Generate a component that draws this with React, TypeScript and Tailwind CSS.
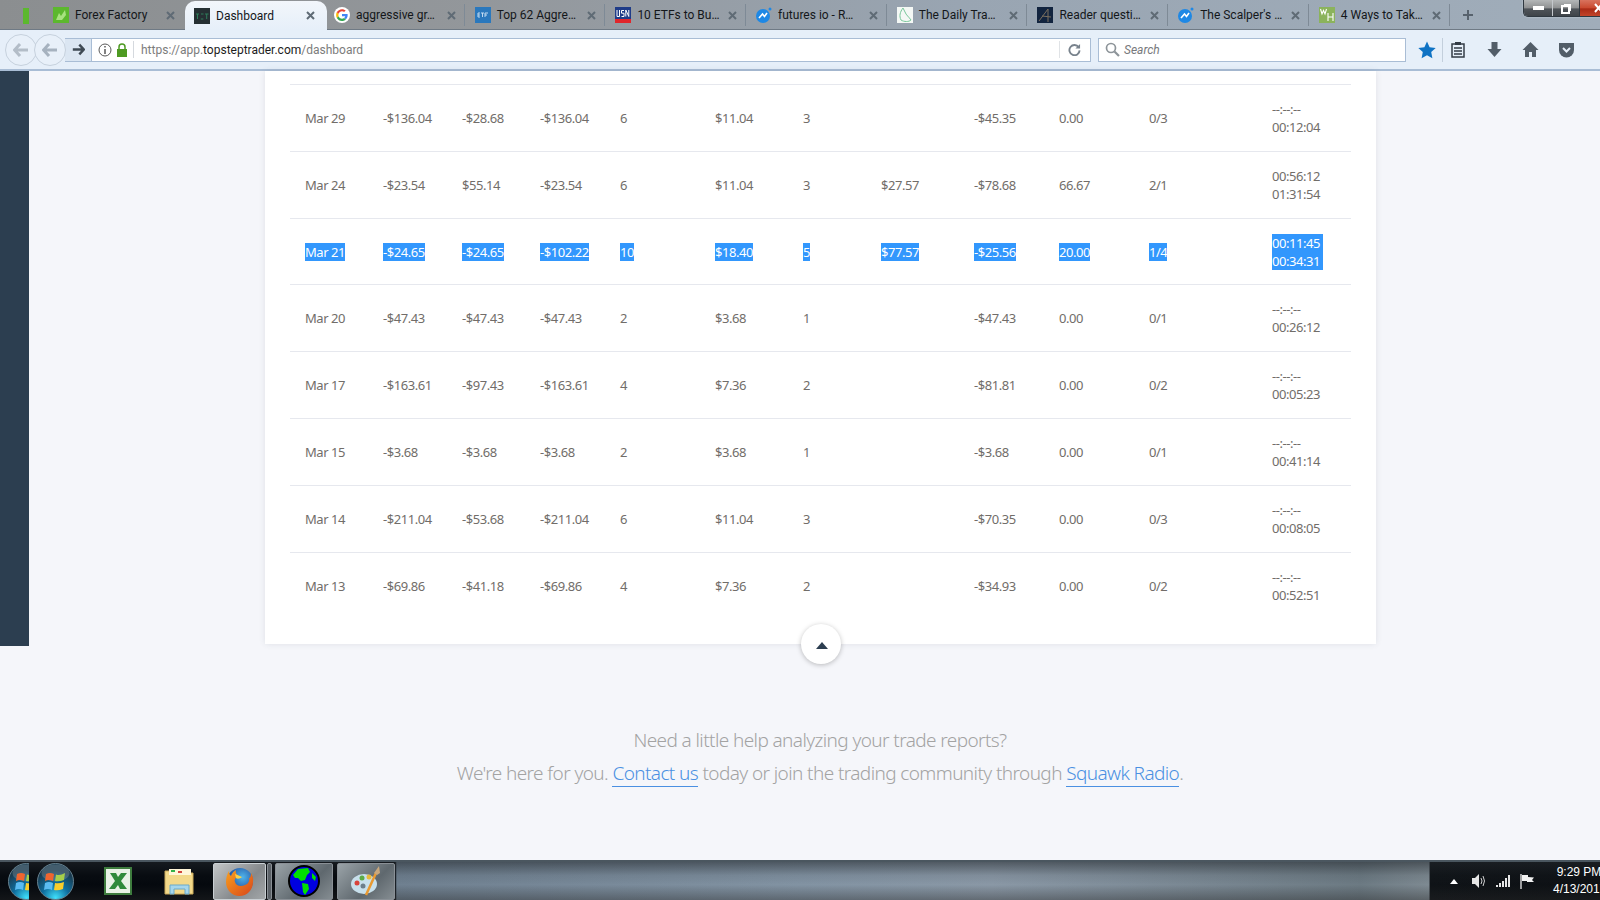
import React from "react";

const rows: { d: string[]; t: [string, string]; sel?: boolean; h: string }[] = [
  { d: ["Mar 29", "-$136.04", "-$28.68", "-$136.04", "6", "$11.04", "3", "", "-$45.35", "0.00", "0/3"], t: ["--:--:--", "00:12:04"], h: "h-[67px]" },
  { d: ["Mar 24", "-$23.54", "$55.14", "-$23.54", "6", "$11.04", "3", "$27.57", "-$78.68", "66.67", "2/1"], t: ["00:56:12", "01:31:54"], h: "h-[67px]" },
  { d: ["Mar 21", "-$24.65", "-$24.65", "-$102.22", "10", "$18.40", "5", "$77.57", "-$25.56", "20.00", "1/4"], t: ["00:11:45", "00:34:31"], sel: true, h: "h-[66px] pt-[1px]" },
  { d: ["Mar 20", "-$47.43", "-$47.43", "-$47.43", "2", "$3.68", "1", "", "-$47.43", "0.00", "0/1"], t: ["--:--:--", "00:26:12"], h: "h-[67px]" },
  { d: ["Mar 17", "-$163.61", "-$97.43", "-$163.61", "4", "$7.36", "2", "", "-$81.81", "0.00", "0/2"], t: ["--:--:--", "00:05:23"], h: "h-[67px]" },
  { d: ["Mar 15", "-$3.68", "-$3.68", "-$3.68", "2", "$3.68", "1", "", "-$3.68", "0.00", "0/1"], t: ["--:--:--", "00:41:14"], h: "h-[67px]" },
  { d: ["Mar 14", "-$211.04", "-$53.68", "-$211.04", "6", "$11.04", "3", "", "-$70.35", "0.00", "0/3"], t: ["--:--:--", "00:08:05"], h: "h-[67px]" },
  { d: ["Mar 13", "-$69.86", "-$41.18", "-$69.86", "4", "$7.36", "2", "", "-$34.93", "0.00", "0/2"], t: ["--:--:--", "00:52:51"], h: "h-[67px]" },
];

const Box = ({ c, children }: { c: string; children?: React.ReactNode }) => (
  <svg width="16" height="16" viewBox="0 0 16 16" className="shrink-0">
    <rect width="16" height="16" fill={c} />
    {children}
  </svg>
);

const Orbit = () => (
  <svg width="16" height="16" viewBox="0 0 16 16" className="shrink-0">
    <circle cx="7" cy="9" r="7" fill="#1e88e5" />
    <path d="M3 11 L6.500 7 L8.500 9.500 L11 6" stroke="#fff" strokeWidth="1.600" fill="none" />
    <circle cx="14" cy="2" r="1.500" fill="#1e88e5" />
  </svg>
);

const icons: Record<string, React.ReactNode> = {
  ff: (
    <Box c="#5cb82e">
      <path d="M3 13 L6 6 L8 9 L12 3 L13 8 L9 13 Z" fill="#a7e27f" />
    </Box>
  ),
  tst: (
    <svg width="16" height="16" viewBox="0 0 16 16" className="shrink-0">
      <rect width="16" height="16" fill="#252f33" />
      <path d="M2 6h3M3.500 6v5M7 6h2.500M6.800 11h2.500M11 6h3.500M12.700 6v5" stroke="#2e7d5b" strokeWidth="1" fill="none" />
    </svg>
  ),
  g: (
    <svg width="16" height="16" viewBox="0 0 48 48" className="shrink-0">
      <circle cx="24" cy="24" r="24" fill="#fff" />
      <path fill="#4285F4" d="M41 24.500c0-1.300-.1-2.200-.4-3.500H24v6.600h9.700c-.4 2.200-1.700 4-3.600 5.200l5.500 4.300c3.300-3 5.400-7.500 5.400-12.600z" />
      <path fill="#34A853" d="M24 42c4.700 0 8.600-1.500 11.600-4.400l-5.500-4.300c-1.500 1.100-3.600 1.800-6.100 1.800-4.700 0-8.700-3.100-10.100-7.400l-5.700 4.400C11.100 38.100 17.100 42 24 42z" />
      <path fill="#FBBC05" d="M13.900 27.700c-.4-1.100-.6-2.400-.6-3.700s.2-2.600.6-3.700l-5.700-4.400C7 18.100 6.400 21 6.400 24s.6 5.900 1.800 8.100z" />
      <path fill="#EA4335" d="M24 12.900c3 0 5 1.300 6.200 2.400l4.800-4.700C32.500 8.300 28.700 6.400 24 6.400c-6.900 0-12.900 3.900-15.800 9.500l5.700 4.400c1.400-4.300 5.400-7.400 10.100-7.400z" />
    </svg>
  ),
  etf: (
    <svg width="16" height="16" viewBox="0 0 16 16" className="shrink-0">
      <rect width="16" height="16" fill="#2a78bd" />
      <path d="M3 6h2M3 8h2M3 10h2M3 6v4M6 6h3M7.500 6v4M10 6h3M10 6v4M10 8h2" stroke="#cfe3f5" strokeWidth="0.900" fill="none" />
    </svg>
  ),
  usn: (
    <svg width="16" height="16" viewBox="0 0 16 16" className="shrink-0">
      <rect width="16" height="16" fill="#1f3c88" />
      <rect y="12" width="16" height="4" fill="#e0262b" />
      <path d="M2 3v6.500h2.500V3M9 3.500H6.500V6.200H9V9.500H6.500M10.800 9.500V3L13.800 9.500V3" stroke="#fff" strokeWidth="1" fill="none" />
    </svg>
  ),
  orbit: <Orbit />,
  daily: (
    <svg width="16" height="16" viewBox="0 0 16 16" className="shrink-0">
      <rect width="16" height="16" fill="#f4f8f5" />
      <path d="M6 1 C3 5 2 9 4 13 C7 15 12 15 14 13 C12 10 9 8 8 5 Z" stroke="#79c79b" strokeWidth="1" fill="none" />
    </svg>
  ),
  reader: (
    <svg width="16" height="16" viewBox="0 0 16 16" className="shrink-0">
      <rect width="16" height="16" fill="#12243f" />
      <path d="M2 14 L11 2 L11 15 M5 9 L14 10" stroke="#7a6e5e" strokeWidth="1" fill="none" />
    </svg>
  ),
  wh: (
    <svg width="16" height="16" viewBox="0 0 16 16" className="shrink-0">
      <rect width="16" height="16" fill="#8bb35c" />
      <path d="M1.500 2L3 7 4.500 3.500 6 7 7.500 2M9 6v8M14 6v8M9 10h5" stroke="#fff" strokeWidth="1.100" fill="none" />
    </svg>
  ),
};

const tabs = [
  { i: "g", t: "aggressive gr…" },
  { i: "etf", t: "Top 62 Aggre…" },
  { i: "usn", t: "10 ETFs to Bu…" },
  { i: "orbit", t: "futures io - R…" },
  { i: "daily", t: "The Daily Tra…" },
  { i: "reader", t: "Reader questi…" },
  { i: "orbit", t: "The Scalper's …" },
  { i: "wh", t: "4 Ways to Tak…" },
];

const X = () => (
  <svg width="9" height="9" viewBox="0 0 9 9" className="shrink-0">
    <path d="M1 1 L8 8 M8 1 L1 8" stroke="#5f6b75" strokeWidth="2" />
  </svg>
);

function Tab({ i, t, w = "w-[140.7px] border-r border-[#7e8a96] pr-[8px]" }: { i: string; t: string; w?: string }) {
  return (
    <div className={`flex h-[22px] shrink-0 items-center pl-[10px] pt-[1px] ${w}`}>
      {icons[i]}
      <span className="ml-[6px] flex-1 whitespace-nowrap text-[12px] text-[#14171a]">{t}</span>
      <X />
    </div>
  );
}

function NavCircle({ className, tone }: { className: string; tone: string }) {
  return (
    <div className={`flex h-[32px] w-[32px] shrink-0 items-center justify-center rounded-full border border-[#c6d1dd] bg-[#e8f0f9] ${className}`}>
      <svg width="16" height="14" viewBox="0 0 16 14">
        <path d="M7 1 L1.500 7 L7 13 M2 7 H15" stroke={tone} strokeWidth="3" fill="none" />
      </svg>
    </div>
  );
}

function Row({ r }: { r: (typeof rows)[number] }) {
  const s = r.sel ? "bg-[#3297fd] text-white" : "";
  return (
    <div className={`grid ${r.h} grid-cols-[78px_79px_78px_80px_95px_88px_78px_93px_85px_90px_123px_1fr] items-center border-t border-[#e6e8ee] pl-[15px]`}>
      {r.d.map((v, k) => (
        <div key={k} className="leading-[18px]">
          {v && <span className={`inline-block ${s}`}>{v}</span>}
        </div>
      ))}
      <div className="leading-[18px]">
        <div className={`w-[51px] ${s}`}>
          <div>{r.t[0]}</div>
          <div>{r.t[1]}</div>
        </div>
      </div>
    </div>
  );
}

function Orb() {
  return (
    <svg width="37" height="37" viewBox="0 0 37 37">
      <defs>
        <radialGradient id="orbg" cx="50%" cy="95%" r="75%">
          <stop offset="0%" stopColor="#3fe0fb" />
          <stop offset="50%" stopColor="#0f6e9e" />
          <stop offset="100%" stopColor="#1a3a4e" />
        </radialGradient>
      </defs>
      <circle cx="18.500" cy="18.500" r="18" fill="url(#orbg)" stroke="#66808e" />
      <ellipse cx="18.500" cy="10" rx="14" ry="8.500" fill="#ffffff" opacity="0.18" />
      <path d="M9 11 Q13 9 17 11 L16 18 Q12 16 8 18 Z" fill="#f0652f" />
      <path d="M19 11.500 Q23 13 28 10 L27 17 Q22 19 18 18 Z" fill="#a6cf4a" />
      <path d="M8 20 Q12 18 16 20 L15 27 Q11 25 7 27 Z" fill="#5bbcf2" />
      <path d="M18 20 Q22 21 27 19 L26 26 Q21 28 17 27 Z" fill="#fbcd2a" />
    </svg>
  );
}

export default function App() {
  return (
    <div className="flex h-[900px] w-[1600px] flex-col overflow-hidden bg-[#f5f6fa] font-['Roboto',sans-serif]">
      {/* tab strip */}
      <div className="relative flex h-[30px] shrink-0 items-center border-b border-[#6f7a85] bg-[linear-gradient(90deg,#8b8e90_0%,#93979b_30%,#99a5b2_60%,#a0adba_100%)] pl-[43px]">
        <div className="absolute left-[23px] top-[8px] h-[16px] w-[6px] bg-[#5cb82e]" />
        <Tab i="ff" t="Forex Factory" w="w-[143px] pr-[11px]" />
        <div className="-mb-[1px] -ml-[1px] -mr-[3px] flex h-[29px] w-[142px] shrink-0 items-center self-end rounded-t-[10px] bg-[linear-gradient(180deg,#f2f6fb,#e6eff9)] pl-[9px] pr-[12px]">
          {icons.tst}
          <span className="ml-[6px] flex-1 whitespace-nowrap text-[12px] text-[#14171a]">Dashboard</span>
          <X />
        </div>
        {tabs.map((t, k) => (
          <Tab key={k} i={t.i} t={t.t} />
        ))}
        <div className="ml-[12px] flex h-[29px] items-center">
          <svg width="12" height="12" viewBox="0 0 12 12">
            <path d="M6 1 V11 M1 6 H11" stroke="#57626d" strokeWidth="2" />
          </svg>
        </div>
        {/* window buttons */}
        <div className="absolute right-0 top-0 flex h-[17px] w-[77px] overflow-hidden rounded-bl-[5px] border border-t-0 border-r-0 border-[#2f3840] shadow-[0_0_2px_rgba(255,255,255,0.5)]">
          <div className="flex w-[28px] items-center justify-center bg-[linear-gradient(180deg,#b4b7b8_0%,#8e9091_50%,#4f5459_55%,#3f4449_100%)]">
            <div className="h-[4px] w-[11px] bg-white" />
          </div>
          <div className="relative flex w-[27px] items-center justify-center border-l border-[#c4c8cc] bg-[linear-gradient(180deg,#b4b7b8_0%,#8e9091_50%,#4f5459_55%,#3f4449_100%)]">
            <div className="h-[9px] w-[9px] -translate-x-[1px] translate-y-[1px] border-2 border-white shadow-[2px_-2px_0_-1px_#ffffff]" />
          </div>
          <div className="flex flex-1 items-center justify-end overflow-hidden border-l border-[#2f3840] bg-[linear-gradient(180deg,#d8735e_0%,#c9492f_50%,#a92a15_55%,#c2452a_100%)]">
            <svg width="6" height="10" viewBox="0 0 6 10">
              <path d="M1 1 L8 9 M8 1 L1 9" stroke="#fff" strokeWidth="2" />
            </svg>
          </div>
        </div>
      </div>

      {/* navigation */}
      <div className="flex h-[41px] shrink-0 items-center border-b-2 border-[#a9bdd5] bg-[#e6eff9] pl-[5px] pr-[8px]">
        <NavCircle className="" tone="#b3bdc8" />
        <NavCircle className="relative z-10 -ml-[3px]" tone="#a6b2bf" />
        <div className="-ml-[1px] flex h-[24px] w-[26px] shrink-0 items-center justify-center border-y border-[#a9bdd5] bg-[#dbe6f2]">
          <svg width="13" height="13" viewBox="0 0 16 14">
            <path d="M9 1 L14.500 7 L9 13 M14 7 H1" stroke="#3f4a54" strokeWidth="3" fill="none" />
          </svg>
        </div>
        <div className="flex h-[24px] w-[1000px] shrink-0 items-center border border-[#a9bdd5] bg-white pl-[6px] pr-[7px] text-[12px]">
          <svg width="14" height="14" viewBox="0 0 14 14" className="shrink-0">
            <circle cx="7" cy="7" r="6" stroke="#5a5a5a" strokeWidth="1" fill="none" />
            <path d="M7 6 V11 M7 3 V4.500" stroke="#5a5a5a" strokeWidth="1.500" />
          </svg>
          <svg width="12" height="14" viewBox="0 0 12 14" className="ml-[4px] shrink-0">
            <path d="M3 6 V4 a3 3 0 0 1 6 0 V6" stroke="#4e9a22" strokeWidth="1.500" fill="none" />
            <rect x="1" y="6" width="10" height="8" fill="#4e9a22" />
          </svg>
          <div className="ml-[5px] mr-[7px] h-[17px] w-px bg-[#d5d9de]" />
          <span className="flex-1 whitespace-nowrap text-[#7c7c7c]">
            https://app.<span className="text-[#1c1c1c]">topsteptrader.com</span>/dashboard
          </span>
          <div className="mr-[8px] h-[17px] w-px bg-[#e0e3e6]" />
          <svg width="13" height="13" viewBox="0 0 14 14" className="mr-[2px] shrink-0">
            <path d="M11.500 4.500 A5.500 5.500 0 1 0 12.500 8" stroke="#78828c" strokeWidth="2" fill="none" />
            <path d="M13 1 V6 H8 Z" fill="#78828c" />
          </svg>
        </div>
        <div className="ml-[7px] flex h-[24px] w-[308px] shrink-0 items-center border border-[#a9bdd5] bg-white pl-[6px]">
          <svg width="15" height="15" viewBox="0 0 15 15" className="shrink-0">
            <circle cx="6" cy="6" r="4.500" stroke="#8d9499" strokeWidth="1.700" fill="none" />
            <path d="M9.500 9.500 L14 14" stroke="#8d9499" strokeWidth="2.200" />
          </svg>
          <span className="ml-[4px] text-[12px] italic text-[#77797c]">Search</span>
        </div>
        <div className="ml-[12px] flex items-center">
          <svg width="18" height="18" viewBox="0 0 18 18" className="shrink-0">
            <path d="M9 0.500 L11.600 6.200 L17.700 6.900 L13.200 11.100 L14.400 17.300 L9 14.200 L3.600 17.300 L4.800 11.100 L0.300 6.900 L6.400 6.200 Z" fill="#0f73c4" />
          </svg>
          <div className="ml-[6px] h-[24px] w-px bg-[#c3cfdc]" />
          <svg width="14" height="17" viewBox="0 0 14 17" className="ml-[8px] shrink-0">
            <rect x="1" y="3" width="12" height="13" stroke="#333c45" strokeWidth="1.500" fill="#e6eff9" />
            <rect x="4" y="1" width="6" height="3" fill="#333c45" />
            <path d="M3 7 H11 M3 10 H11 M3 13 H11" stroke="#333c45" strokeWidth="1.300" />
          </svg>
          <svg width="15" height="17" viewBox="0 0 15 17" className="ml-[22px] shrink-0">
            <path d="M4.500 1 H10.500 V8 H14.500 L7.500 16 L0.500 8 H4.500 Z" fill="#525d68" />
          </svg>
          <svg width="17" height="17" viewBox="0 0 17 17" className="ml-[20px] shrink-0">
            <path d="M8.500 1 L16.500 9 H14 V16 H10 V11 H7 V16 H3 V9 H0.500 Z" fill="#525d68" />
          </svg>
          <svg width="17" height="16" viewBox="0 0 17 16" className="ml-[19px] shrink-0">
            <path d="M1 1 H16 V8 A7.500 7.500 0 0 1 1 8 Z" fill="#525d68" />
            <path d="M5 6 L8.500 9.500 L12 6" stroke="#e6eff9" strokeWidth="2" fill="none" />
          </svg>
        </div>
      </div>

      {/* page */}
      <div className="relative flex-1 text-[#a8a8a8]">
        <div className="flex items-start">
          <div className="h-[575px] w-[29px] shrink-0 bg-[#2c3e50]" />
          <div className="relative ml-[236px] h-[573px] w-[1111px] bg-white px-[25px] pt-[13px] text-[13px] text-[#716d69] shadow-[0_0_6px_rgba(60,70,90,0.12)] font-['Noto_Sans',sans-serif] tracking-[-0.45px]">
            {rows.map((r) => (
              <Row key={r.d[0]} r={r} />
            ))}
            <div className="absolute bottom-[-20px] left-[536px] flex h-[40px] w-[40px] items-center justify-center rounded-full bg-white shadow-[0_1px_5px_rgba(0,0,0,0.25)]">
              <svg width="12" height="7" viewBox="0 0 12 7" className="ml-[2px] mt-[3px]">
                <path d="M6 0 L12 7 H0 Z" fill="#2c3e50" />
              </svg>
            </div>
          </div>
        </div>
        <div className="mt-[78px] flex flex-col items-center pl-[40px] font-['Noto_Sans',sans-serif] text-[19px] font-light leading-[33px] tracking-[-0.6px] text-[#a3a3a3]">
          <p>Need a little help analyzing your trade reports?</p>
          <p>
            We're here for you. <span className="border-b border-[#4a90e2] text-[#4a90e2]">Contact us</span> today or join the trading community through{" "}
            <span className="border-b border-[#4a90e2] text-[#4a90e2]">Squawk Radio</span>.
          </p>
        </div>
      </div>

      {/* taskbar */}
      <div className="flex h-[40px] shrink-0 items-center overflow-hidden border-t-2 border-[#4a565f] bg-[linear-gradient(180deg,rgba(35,40,45,0.55)_0%,rgba(35,40,45,0.1)_35%,rgba(30,30,30,0)_60%,rgba(40,40,40,0.4)_100%),linear-gradient(90deg,#05090e_0%,#05090e_24.7%,#6f8090_24.8%,#8293a3_50%,#8a98a6_62%,#6c7a83_85%,#7e8a92_89.3%,#0f1317_89.4%,#0d1014_100%)]">
        <div className="ml-[8px] h-[37px] w-[21px] shrink-0 overflow-hidden">
          <Orb />
        </div>
        <div className="ml-[8px] shrink-0">
          <Orb />
        </div>
        <svg width="28" height="28" viewBox="0 0 28 28" className="ml-[30px] shrink-0">
          <rect x="1" y="1" width="26" height="26" fill="#e8f2e6" stroke="#3e7c3e" strokeWidth="2" />
          <path d="M6 6 H12 L14 10 L17 6 H23 L17 14 L23 22 H16 L14 18 L11 22 H5 L11 14 Z" fill="#2f8a3b" />
        </svg>
        <svg width="32" height="28" viewBox="0 0 32 28" className="ml-[32px] shrink-0">
          <path d="M1 4 H12 L14 6 H29 V27 H1 Z" fill="#f3d98a" stroke="#c9a95a" />
          <rect x="5" y="2" width="22" height="6" fill="#fff6d8" />
          <rect x="7" y="3" width="4" height="2" fill="#32b24a" />
          <rect x="14" y="4" width="4" height="2" fill="#d2453c" />
          <path d="M6 27 V18 H25 V27 H21 V22 H10 V27 Z" fill="#a5d6ec" stroke="#6ba9c9" />
        </svg>
        <div className="ml-[17px] flex h-[37px] w-[53px] shrink-0 items-center justify-center rounded-[2px] border border-[#c9cfd3] bg-[linear-gradient(135deg,#c3c6c8,#85898c_60%,#a3a7a9)]">
          <svg width="31" height="31" viewBox="0 0 31 31">
            <defs>
              <radialGradient id="fxb" cx="60%" cy="35%" r="65%">
                <stop offset="0%" stopColor="#4fb4ea" />
                <stop offset="100%" stopColor="#1c3f94" />
              </radialGradient>
              <linearGradient id="fxo" x1="0" y1="0" x2="1" y2="1">
                <stop offset="0%" stopColor="#f9a01e" />
                <stop offset="100%" stopColor="#d8461b" />
              </linearGradient>
            </defs>
            <circle cx="16" cy="15" r="13" fill="url(#fxb)" />
            <path d="M27 7 C30 12 29 15 29 16 C29 24 23 30 15.500 30 C8 30 2 24 2 16 C2 12 3 8 5 5 C5 8 6 9 7 10 C8 7 10 5 12 4 C11 7 13 9 15 10 C12 11 10 13 11 16 C12 20 17 21 21 19 C24 18 26 15 25 12 C26 12 27 11 27 7 Z" fill="url(#fxo)" />
            <path d="M11 8 C13 9 16 10 18 11 C16 13 13 13 12 12 Z" fill="#fbd34a" />
          </svg>
        </div>
        <div className="ml-[1px] h-[37px] w-[5px] shrink-0 rounded-[2px] border border-[#8a9096] bg-[#5c6268]" />
        <div className="ml-[3px] flex h-[37px] w-[58px] shrink-0 items-center justify-center rounded-[2px] border border-[#8a9096] bg-[linear-gradient(135deg,#9aa3a8,#5f686e_60%,#858d92)]">
          <svg width="32" height="32" viewBox="0 0 32 32">
            <circle cx="16" cy="16" r="15" fill="#0000e0" stroke="#000" strokeWidth="2" />
            <path d="M5 10 L10 4 L20 3 L22 7 L19 10 L17 15 L13 16 L10 13 L7 13 Z M14 18 L20 19 L21 24 L17 30 L15 27 Z M24 8 L28 12 L27 16 L24 13 Z" fill="#00e000" />
          </svg>
        </div>
        <div className="ml-[4px] flex h-[37px] w-[58px] shrink-0 items-center justify-center rounded-[2px] border border-[#8a9096] bg-[linear-gradient(135deg,#9aa3a8,#5f686e_60%,#858d92)]">
          <svg width="32" height="32" viewBox="0 0 32 32">
            <ellipse cx="14" cy="19" rx="13" ry="10" fill="#c8e0ec" />
            <circle cx="7" cy="18" r="2.500" fill="#d8443c" />
            <circle cx="12" cy="13" r="2.500" fill="#5cab46" />
            <circle cx="19" cy="12" r="2.500" fill="#e8b93c" />
            <circle cx="13" cy="21" r="2.500" fill="#6d7f8c" />
            <path d="M16 30 L26 8" stroke="#e99a32" strokeWidth="2.500" />
            <path d="M24 8 L29 1 L30 8 L27 10 Z" fill="#c9a77c" />
          </svg>
        </div>
        <div className="flex-1" />
        <svg width="8" height="5" viewBox="0 0 8 5" className="shrink-0">
          <path d="M4 0 L8 5 H0 Z" fill="#fff" />
        </svg>
        <svg width="15" height="14" viewBox="0 0 15 14" className="ml-[14px] shrink-0">
          <path d="M0 4 H3 L7 0 V14 L3 10 H0 Z" fill="#e6e6e6" />
          <path d="M9 4 Q11 7 9 10 M11 2 Q14 7 11 12" stroke="#d0d0d0" fill="none" />
        </svg>
        <svg width="15" height="12" viewBox="0 0 15 12" className="ml-[9px] shrink-0">
          <path d="M0 10h2v2H0zM3 8h2v4H3zM6 6h2v6H6zM9 3h2v9H9zM12 0h2v12h-2z" fill="#e6e6e6" />
        </svg>
        <svg width="15" height="15" viewBox="0 0 15 15" className="ml-[9px] shrink-0">
          <path d="M1 0 V15" stroke="#fff" strokeWidth="1.200" />
          <path d="M2 1 H8 V3 L14 3.500 L12 6 L14 8 H7 V7 H2 Z" fill="#f2f2f2" />
        </svg>
        <div className="ml-[18px] w-[52px] shrink-0 whitespace-nowrap text-center font-['Liberation_Sans',sans-serif] text-[12px] leading-[17px] text-white -mr-[5px]">
          <div>9:29 PM</div>
          <div>4/13/2017</div>
        </div>
      </div>
    </div>
  );
}
